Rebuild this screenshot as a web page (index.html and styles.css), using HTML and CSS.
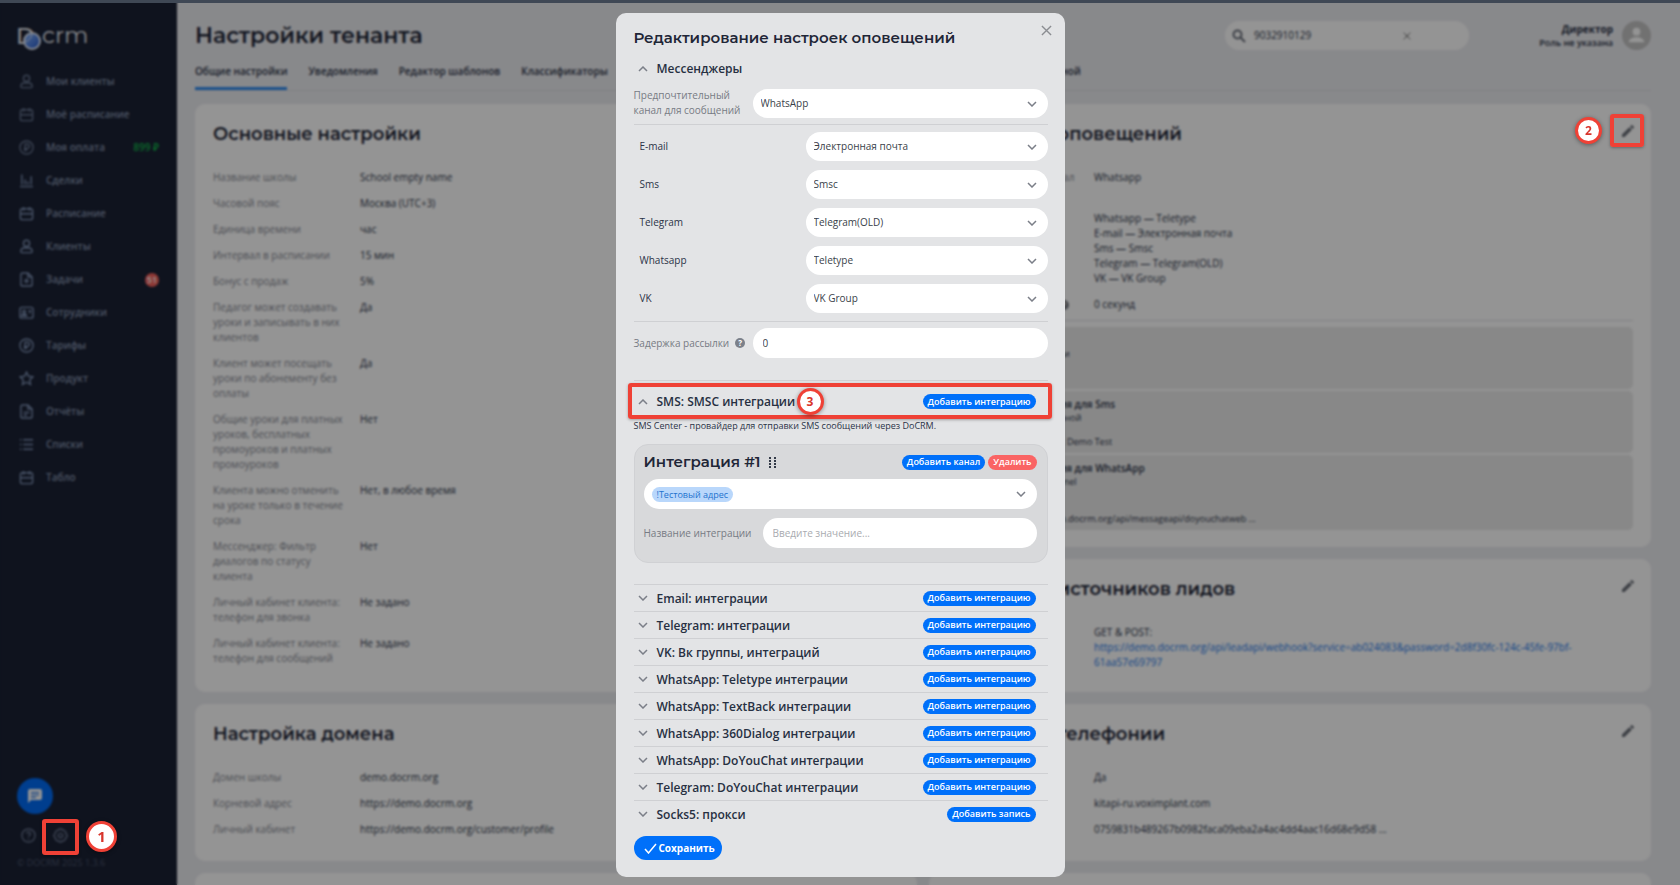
FILE: index.html
```html
<!DOCTYPE html>
<html lang="ru">
<head>
<meta charset="utf-8">
<title>Настройки тенанта</title>
<link rel="stylesheet" href="styles.css">
</head>
<body>
<svg class="sprite" aria-hidden="true">
  <symbol id="i-user" viewBox="0 0 16 16"><circle cx="8" cy="4.7" r="3.3"/><path d="M2 13.2c0-2.6 2-3.6 3.6-3.6h4.8c1.600 0 3.600 1 3.600 3.600 0 .8-.6 1.300-1.300 1.300H3.300c-.7 0-1.300-.5-1.300-1.300z"/></symbol>
  <symbol id="i-cal" viewBox="0 0 16 16"><rect x="1.500" y="3" width="13" height="11.500" rx="2"/><path d="M4.800 1v4M11.200 1v4M1.500 8.200h13"/></symbol>
  <symbol id="i-rub" viewBox="0 0 16 16"><circle cx="8" cy="8" r="7"/><path d="M6.500 12V4.500h2.300a2.200 2.200 0 0 1 0 4.400H5.200M5.200 10.600h3.800"/></symbol>
  <symbol id="i-chart" viewBox="0 0 16 16"><path d="M1 14.500h14M3 1.500v11M6.500 7v5.500M9.500 9v3.500M13 3.500v9"/></symbol>
  <symbol id="i-task" viewBox="0 0 16 16"><path d="M4 1h5.500L14 5.500V13a2 2 0 0 1-2 2H4a2 2 0 0 1-2-2V3a2 2 0 0 1 2-2zM9.500 1v4.500H14"/><circle cx="8" cy="9.500" r="1.500"/></symbol>
  <symbol id="i-idcard" viewBox="0 0 16 16"><rect x="1" y="2.500" width="14" height="11.500" rx="2"/><circle cx="5.500" cy="7" r="1.500"/><path d="M3 11.500c0-2.600 5-2.600 5 0zM10 6h3M11.500 9V6"/></symbol>
  <symbol id="i-star" viewBox="0 0 16 16"><path d="M8 1.200l2.100 4.400 4.800.6-3.500 3.300.9 4.800L8 12l-4.300 2.300.9-4.800L1.100 6.200l4.800-.6z"/></symbol>
  <symbol id="i-report" viewBox="0 0 16 16"><path d="M4 1h5.500L14 5.500V13a2 2 0 0 1-2 2H4a2 2 0 0 1-2-2V3a2 2 0 0 1 2-2zM9.500 1v4.500H14M5 9h6M5 12h3.500"/></symbol>
  <symbol id="i-list" viewBox="0 0 16 16"><path d="M4.500 3H15M4.500 8H15M4.500 13H15M1 3h1.500M1 8h1.500M1 13h1.500"/></symbol>
  <symbol id="i-pencil" viewBox="0 0 24 24"><path d="M3 17.250V21h3.750L17.800 9.940l-3.750-3.750L3 17.250zM20.700 7.040a1 1 0 0 0 0-1.410l-2.340-2.340a1 1 0 0 0-1.410 0l-1.830 1.830 3.750 3.750 1.830-1.830z"/></symbol>
  <symbol id="i-down" viewBox="0 0 10 6"><path d="M1 1l4 4 4-4"/></symbol>
  <symbol id="i-up" viewBox="0 0 10 6"><path d="M1 5l4-4 4 4"/></symbol>
  <symbol id="i-close" viewBox="0 0 12 12"><path d="M1 1l10 10M11 1L1 11"/></symbol>
</svg>

<div class="app">
  <aside class="sidebar">
    <svg class="logo" viewBox="0 0 72 26" role="img" aria-label="Docrm">
      <defs><linearGradient id="ball" x1="0" y1="0" x2="1" y2="1"><stop offset="0" stop-color="#86b6ff"/><stop offset="1" stop-color="#2456c8"/></linearGradient></defs>
      <text class="logo-d" x="-1" y="18">D</text>
      <circle cx="15" cy="15" r="8" fill="url(#ball)" stroke="#dfe6f5" stroke-width="2"/>
      <path d="M8 16c3-1 6-3 7-8" fill="none" stroke="#dfe6f5" stroke-width="1"/>
      <text class="logo-t" x="25" y="17">crm</text>
    </svg>
    <nav class="menu">
      <a class="item dim" href="#"><svg class="ic"><use href="#i-user"/></svg>Мои клиенты</a>
      <a class="item dim" href="#"><svg class="ic"><use href="#i-cal"/></svg>Моё расписание</a>
      <a class="item dim" href="#"><svg class="ic"><use href="#i-rub"/></svg>Моя оплата<span class="sum">899 ₽</span></a>
      <a class="item" href="#"><svg class="ic"><use href="#i-chart"/></svg>Сделки</a>
      <a class="item" href="#"><svg class="ic"><use href="#i-cal"/></svg>Расписание</a>
      <a class="item" href="#"><svg class="ic"><use href="#i-user"/></svg>Клиенты</a>
      <a class="item" href="#"><svg class="ic"><use href="#i-task"/></svg>Задачи<span class="count">51</span></a>
      <a class="item" href="#"><svg class="ic"><use href="#i-idcard"/></svg>Сотрудники</a>
      <a class="item" href="#"><svg class="ic"><use href="#i-rub"/></svg>Тарифы</a>
      <a class="item" href="#"><svg class="ic"><use href="#i-star"/></svg>Продукт</a>
      <a class="item" href="#"><svg class="ic"><use href="#i-report"/></svg>Отчёты</a>
      <a class="item" href="#"><svg class="ic"><use href="#i-list"/></svg>Списки</a>
      <a class="item" href="#"><svg class="ic"><use href="#i-cal"/></svg>Табло</a>
    </nav>
    <div class="side-foot">
      <button class="chat" aria-label="Чат"><svg viewBox="0 0 16 16"><path fill="#fff" d="M3 1h10a2 2 0 0 1 2 2v7a2 2 0 0 1-2 2H4l-3 3V3a2 2 0 0 1 2-2z"/><path d="M4 4.500h8M4 7h8M4 9.500h5" stroke="#0a63e0" stroke-width="1.200"/></svg></button>
      <div class="tools">
        <button class="tool" aria-label="Помощь"><svg class="ic" viewBox="0 0 16 16"><circle cx="8" cy="8" r="7"/><path d="M6 6.200a2 2 0 1 1 2.600 1.900c-.5.2-.6.5-.6 1.200M8 11v1.200"/></svg></button>
        <button class="tool" aria-label="Настройки"><svg class="ic" viewBox="0 0 16 16"><circle cx="8" cy="8" r="2.300"/><path d="M6.500 1h3l.6 1.600 1.700-.3 2 2.100-.5 1.700L15 7v2.400l-1.700.9.200 1.700-2.100 1.900-1.600-.4L9 15H7l-.8-1.500-1.700.4-2-2 .3-1.700L1 9.200V7l1.700-.9-.3-1.800 2-2 1.600.3z"/></svg></button>
      </div>
      <div class="copy">© DOCRM 2025 1.3.6</div>
    </div>
  </aside>

  <main class="main">
    <header class="top">
      <h1>Настройки тенанта</h1>
      <div class="search">
        <svg viewBox="0 0 14 14"><circle cx="5.500" cy="5.500" r="4"/><path d="M8.500 8.500l4.500 4.500"/></svg>
        <input type="text" value="9032910129" aria-label="Поиск">
        <button class="clear" aria-label="Очистить"><svg><use href="#i-close"/></svg></button>
      </div>
      <div class="user"><div class="who"><b>Директор</b><span>Роль не указана</span></div>
        <svg class="avatar" viewBox="0 0 30 30"><circle cx="15" cy="15" r="15" fill="#c3c3c3"/><circle cx="15" cy="11" r="4" fill="#fff"/><path d="M7 22c0-7 16-7 16 0z" fill="#fff"/></svg></div>
    </header>
    <nav class="tabs">
      <a class="tab on" href="#">Общие настройки</a><a class="tab" href="#">Уведомления</a><a class="tab" href="#">Редактор шаблонов</a><a class="tab" href="#">Классификаторы</a><a class="tab" href="#">Пользовательские поля</a><a class="tab" href="#">Интеграции</a><a class="tab" href="#">Управление кассой</a><a class="tab" href="#">Настройки основной</a>
    </nav>
    <div class="cols">
      <div class="col">
        <section class="card long">
          <h2>Основные настройки</h2>
          <dl class="props">
            <dt>Название школы</dt><dd>School empty name</dd>
            <dt>Часовой пояс</dt><dd>Москва (UTC+3)</dd>
            <dt>Единица времени</dt><dd>час</dd>
            <dt>Интервал в расписании</dt><dd>15 мин</dd>
            <dt>Бонус с продаж</dt><dd>5%</dd>
            <dt>Педагог может создавать уроки и записывать в них клиентов</dt><dd>Да</dd>
            <dt>Клиент может посещать уроки по абонементу без оплаты</dt><dd>Да</dd>
            <dt>Общие уроки для платных уроков, бесплатных промоуроков и платных промоуроков</dt><dd>Нет</dd>
            <dt>Клиента можно отменить на уроке только в течение срока</dt><dd>Нет, в любое время</dd>
            <dt>Мессенджер: Фильтр диалогов по статусу клиента</dt><dd>Нет</dd>
            <dt>Личный кабинет клиента: телефон для звонка</dt><dd>Не задано</dd>
            <dt>Личный кабинет клиента: телефон для сообщений</dt><dd>Не задано</dd>
          </dl>
        </section>
        <section class="card">
          <h2>Настройка домена</h2>
          <dl class="props">
            <dt>Домен школы</dt><dd>demo.docrm.org</dd>
            <dt>Корневой адрес</dt><dd>https://demo.docrm.org</dd>
            <dt>Личный кабинет</dt><dd>https://demo.docrm.org/customer/profile</dd>
          </dl>
        </section>
        <section class="card rest"></section>
      </div>
      <div class="col">
        <section class="card boxed">
          <button class="edit" aria-label="Изменить"><svg><use href="#i-pencil"/></svg></button>
          <h2>Настройки оповещений</h2>
          <dl class="props">
            <dt>Предпочтительный канал для сообщений</dt><dd>Whatsapp</dd>
            <dt>Каналы</dt><dd>Whatsapp — Teletype<br>E-mail — Электронная почта<br>Sms — Smsc<br>Telegram — Telegram(OLD)<br>VK — VK Group</dd>
            <dt class="help-row wide">Задержка рассылки<i class="q">?</i></dt><dd>0 секунд</dd>
          </dl>
          <div class="boxes">
            <div class="box"><b>Общие</b><span>Без рассылки</span></div>
            <div class="box"><b>Интеграция для Sms</b><span>Роль: Основной</span><span class="far">Имя канала: Demo Test</span></div>
            <div class="box tall"><b>Интеграция для WhatsApp</b><span>Канал: Channel</span><span class="far">https://demo.docrm.org/api/messageapi/doyouchatweb ...</span></div>
          </div>
        </section>
        <section class="card leads">
          <button class="edit" aria-label="Изменить"><svg><use href="#i-pencil"/></svg></button>
          <h2>Настройки источников лидов</h2>
          <dl class="props">
            <dt>Webhook</dt><dd>GET &amp; POST:<br><a href="#">https://demo.docrm.org/api/leadapi/webhook?service=ab024083&amp;password=2d8f30fc-124c-45fe-97bf-61aa57e69797</a></dd>
          </dl>
        </section>
        <section class="card">
          <button class="edit" aria-label="Изменить"><svg><use href="#i-pencil"/></svg></button>
          <h2>Настройки телефонии</h2>
          <dl class="props">
            <dt>Включена</dt><dd>Да</dd>
            <dt>Домен</dt><dd>kitapi-ru.voximplant.com</dd>
            <dt>Токен</dt><dd>0759831b489267b0982faca09eba2a4ac4dd4aac16d68e9d58 ...</dd>
          </dl>
        </section>
        <section class="card rest"></section>
      </div>
    </div>
  </main>
</div>

<div class="overlay">
  <div class="modal" role="dialog" aria-labelledby="mt">
    <button class="x" aria-label="Закрыть"><svg><use href="#i-close"/></svg></button>
    <h3 id="mt">Редактирование настроек оповещений</h3>
    <div class="sec first"><svg class="chev"><use href="#i-up"/></svg><span>Мессенджеры</span></div>
    <div class="field"><label for="f0">Предпочтительный канал для сообщений</label><div class="sel"><select id="f0"><option>WhatsApp</option></select><svg class="chev"><use href="#i-down"/></svg></div></div>
    <div class="channels">
      <label for="c1">E-mail</label><div class="sel"><select id="c1"><option>Электронная почта</option></select><svg class="chev"><use href="#i-down"/></svg></div>
      <label for="c2">Sms</label><div class="sel"><select id="c2"><option>Smsc</option></select><svg class="chev"><use href="#i-down"/></svg></div>
      <label for="c3">Telegram</label><div class="sel"><select id="c3"><option>Telegram(OLD)</option></select><svg class="chev"><use href="#i-down"/></svg></div>
      <label for="c4">Whatsapp</label><div class="sel"><select id="c4"><option>Teletype</option></select><svg class="chev"><use href="#i-down"/></svg></div>
      <label for="c5">VK</label><div class="sel"><select id="c5"><option>VK Group</option></select><svg class="chev"><use href="#i-down"/></svg></div>
    </div>
    <div class="field"><label for="f1" class="help-row">Задержка рассылки<i class="q">?</i></label><input id="f1" class="inp" type="text" value="0"></div>

    <div class="open-sec">
      <div class="sec"><svg class="chev"><use href="#i-up"/></svg><span>SMS: SMSC интеграции</span><button class="pill">Добавить интеграцию</button>
        <div class="mark mark3"></div><div class="num num3">3</div></div>
      <p class="note">SMS Center - провайдер для отправки SMS сообщений через DoCRM.</p>
      <div class="panel">
        <div class="phead"><h4>Интеграция #1</h4>
          <svg class="dots" viewBox="0 0 7 11"><path d="M0 0h2v2H0zM5 0h2v2H5zM0 3h2v2H0zM5 3h2v2H5zM0 6h2v2H0zM5 6h2v2H5zM0 9h2v2H0zM5 9h2v2H5z"/></svg>
          <button class="pill">Добавить канал</button><button class="pill red">Удалить</button></div>
        <button class="multi" role="combobox" aria-expanded="false" aria-label="Филиал"><span class="chip">!Тестовый адрес</span><svg class="chev"><use href="#i-down"/></svg></button>
        <div class="field"><label for="f2">Название интеграции</label><input id="f2" class="inp" type="text" placeholder="Введите значение..."></div>
      </div>
    </div>

    <div class="list">
      <div class="sec"><svg class="chev"><use href="#i-down"/></svg><span>Email: интеграции</span><button class="pill">Добавить интеграцию</button></div>
      <div class="sec"><svg class="chev"><use href="#i-down"/></svg><span>Telegram: интеграции</span><button class="pill">Добавить интеграцию</button></div>
      <div class="sec"><svg class="chev"><use href="#i-down"/></svg><span>VK: Вк группы, интеграций</span><button class="pill">Добавить интеграцию</button></div>
      <div class="sec"><svg class="chev"><use href="#i-down"/></svg><span>WhatsApp: Teletype интеграции</span><button class="pill">Добавить интеграцию</button></div>
      <div class="sec"><svg class="chev"><use href="#i-down"/></svg><span>WhatsApp: TextBack интеграции</span><button class="pill">Добавить интеграцию</button></div>
      <div class="sec"><svg class="chev"><use href="#i-down"/></svg><span>WhatsApp: 360Dialog интеграции</span><button class="pill">Добавить интеграцию</button></div>
      <div class="sec"><svg class="chev"><use href="#i-down"/></svg><span>WhatsApp: DoYouChat интеграции</span><button class="pill">Добавить интеграцию</button></div>
      <div class="sec"><svg class="chev"><use href="#i-down"/></svg><span>Telegram: DoYouChat интеграции</span><button class="pill">Добавить интеграцию</button></div>
      <div class="sec"><svg class="chev"><use href="#i-down"/></svg><span>Socks5: прокси</span><button class="pill">Добавить запись</button></div>
    </div>
    <button class="save"><svg viewBox="0 0 13 11"><path d="M1 6l3.500 4L12 1"/></svg>Сохранить</button>
  </div>
</div>
<div class="strip"></div>
<div class="mark mark1"></div><div class="num num1">1</div>
<div class="mark mark2"></div><div class="num num2">2</div>
</body>
</html>
```
FILE: styles.css
```css
* { box-sizing: border-box; }
body { margin: 0; font: 10px/15px "Open Sans", "Noto Sans", sans-serif; color: #2b3347; background: #ebecf0; overflow: hidden; }
button { font: inherit; border: 0; background: none; padding: 0; cursor: pointer; }
a { text-decoration: none; color: inherit; }
h1, h2, h3, h4 { margin: 0; font-family: Montserrat, Inter, sans-serif; font-weight: 600; color: #1f2637; }
svg { display: block; fill: none; stroke: none; }
.sprite { position: absolute; width: 0; height: 0; }

.app { display: flex; height: 100vh; overflow: hidden; }

/* Sidebar */
.sidebar { width: 177px; flex: none; background: #1a2134; padding: 26px 18px 14px 17px; display: flex; flex-direction: column; }
.logo { width: 72px; height: 26px; overflow: visible; }
.logo text { fill: #e8eaf0; font-family: Montserrat, Inter, sans-serif; }
.logo-d { font-size: 23px; font-weight: 500; }
.logo-t { font-size: 23px; font-weight: 400; }
.menu { display: flex; flex-direction: column; margin-top: 13px; }
.item { display: flex; align-items: center; height: 33px; padding-left: 2px; gap: 12px; color: #8593ae; font-weight: 600; white-space: nowrap; }
.ic { width: 15px; height: 15px; fill: none; stroke: #7d90b2; stroke-width: 1.5; flex: none; }
.dim .ic { stroke: #66748f; }
.sum { margin-left: auto; color: #12b34a; }
.count { margin-left: auto; width: 14px; height: 14px; border-radius: 50%; background: #f4615c; color: #fff; font-size: 9px; line-height: 14px; text-align: center; }
.side-foot { margin-top: auto; }
.chat { display: flex; align-items: center; justify-content: center; width: 36px; height: 36px; border-radius: 50%; background: #006bf5; }
.chat svg { width: 16px; height: 16px; }
.tools { display: flex; gap: 17px; padding: 14px 4px 12px; }
.tool .ic { stroke: #66728c; }
.copy { color: #4c566f; font-size: 9px; line-height: 16px; }

/* Header */
.main { flex: 1; min-width: 0; padding: 20px 29px 0 18px; }
.top { display: flex; align-items: center; height: 31px; }
.top h1 { font-size: 22px; line-height: 30px; }
.search { display: flex; align-items: center; width: 244px; height: 29px; margin-left: auto; padding: 0 58px 0 7px; gap: 8px; border-radius: 15px; background: #fff; }
.search > svg { width: 14px; height: 14px; stroke: #6b707c; stroke-width: 2; flex: none; }
.search input { flex: 1; min-width: 0; border: 0; padding: 0; background: none; font: inherit; color: #2b3347; }
.clear svg { width: 8px; height: 8px; stroke: #777; stroke-width: 1.5; }
.user { display: flex; align-items: center; justify-content: flex-end; gap: 9px; width: 182px; }
.who { display: flex; flex-direction: column; text-align: right; font-size: 9px; line-height: 13px; font-weight: 600; }
.who b { font-size: 10px; font-weight: 700; }
.avatar { width: 29px; height: 29px; }
.tabs { display: flex; gap: 21px; border-bottom: 1px solid #dcdde2; margin-top: 8px; height: 32px; white-space: nowrap; }
.tab { font-weight: 600; line-height: 24px; height: 31px; }
.on { border-bottom: 3px solid #2f8bef; }

/* Cards */
.cols { display: flex; gap: 12px; margin-top: 13px; align-items: flex-start; }
.col { flex: 1; min-width: 0; display: flex; flex-direction: column; gap: 12px; }
.card { position: relative; background: #fff; border-radius: 10px; padding: 18px 18px 24px; }
.card h2 { font-size: 18px; line-height: 24px; }
.rest { height: 120px; }
.props { display: grid; grid-template-columns: 135px 1fr; gap: 11px 12px; margin: 24px 0 0; }
.props dt { color: #858892; }
.props dd { margin: 0; overflow-wrap: break-word; padding-right: 40px; }
.props dd a { color: #2176e8; }
.edit { position: absolute; top: 19px; right: 15px; }
.edit svg { width: 16px; height: 16px; fill: #6a6e78; }
.help-row { display: flex; align-items: center; gap: 6px; }
.wide { gap: 16px; }
.q { display: inline-block; width: 10px; height: 10px; border-radius: 50%; background: #7b808a; color: #fff; font: 700 8px/10px "Open Sans", sans-serif; text-align: center; }
.long { padding-bottom: 26px; }
.leads { padding-bottom: 22px; }
.boxed { padding-bottom: 17px; }
.boxes { display: flex; flex-direction: column; gap: 2px; margin-top: 8px; border-top: 1px solid #e0e0e3; padding-top: 6px; }
.box { display: flex; flex-direction: column; height: 62px; padding: 6px 0 4px 64px; border-radius: 5px; background: #ebebeb; font-size: 9px; line-height: 14px; }
.box b { font-weight: 600; font-size: 10px; }
.far { margin-top: auto; }
.tall { height: 75px; }

/* Modal */
.overlay { position: fixed; inset: 0; display: flex; justify-content: center; align-items: flex-start; padding-top: 13px; background: rgba(0, 0, 0, .42); backdrop-filter: blur(1px); }
.modal { position: relative; width: 449px; padding: 13px 17px 17px 18px; border-radius: 10px; background: #e3e4e6; }
.modal h3 { font-size: 15px; line-height: 24px; }
.x { position: absolute; top: 12px; right: 13px; }
.x svg { width: 11px; height: 11px; stroke: #8b8d92; stroke-width: 1.5; }
.chev { width: 10px; height: 6px; stroke: #7b7f88; stroke-width: 1.5; flex: none; }
.sec { position: relative; display: flex; align-items: center; height: 27px; padding: 0 12px 0 4px; }
.sec > .chev { margin-right: 9px; }
.sec > span { font-size: 12px; font-weight: 600; color: #273042; }
.first { margin: 5px 0 6px; }
.pill { margin-left: auto; height: 15px; padding: 0 5px; border-radius: 8px; background: #0070fa; color: #fff; font-size: 9px; line-height: 14px; font-weight: 600; }
.pill + .pill { margin-left: 3px; }
.red { background: #fa6464; }
.field { display: flex; align-items: center; }
.field label { width: 119px; flex: none; color: #777b84; }
.sel { position: relative; flex: 1; min-width: 0; }
.sel .chev, .multi .chev { position: absolute; right: 11px; top: 12px; pointer-events: none; }
select, .inp { display: block; width: 100%; border: 0; border-radius: 15px; background: #fff; color: #3a3f4a; font: inherit; appearance: none; }
select { height: 29px; padding: 0 30px 0 8px; }
.inp { height: 30px; padding: 0 10px; flex: 1; min-width: 0; }
.inp::placeholder { color: #a9abb0; }
.channels { display: grid; grid-template-columns: 166px 1fr; gap: 9px 0; align-items: center; margin: 6px 0; padding: 7px 0 8px 6px; border: solid #cfd0d3; border-width: 1px 0; }
.open-sec { margin: 22px 0 21px; border-top: 1px solid #cfd0d3; padding-top: 7px; }
.note { margin: 3px 0 10px; font-size: 9px; line-height: 16px; }
.panel { padding: 8px 10px 14px 9px; border: 1px solid #d0d1d4; border-radius: 14px; background: #d8d9db; }
.phead { display: flex; align-items: center; height: 18px; margin-bottom: 8px; }
.phead h4 { font-size: 15px; line-height: 18px; }
.dots { width: 7px; height: 11px; margin-left: 8px; fill: #333a48; }
.multi { position: relative; display: flex; align-items: center; width: 100%; height: 30px; padding: 0 8px; margin-bottom: 9px; border-radius: 15px; background: #fff; }
.chip { padding: 0 5px; border-radius: 8px; background: #b9d7fb; color: #2373cf; font-size: 9px; line-height: 15px; }
.list .sec { border-top: 1px solid #cfd0d3; }
.save { display: flex; align-items: center; gap: 2px; height: 24px; margin-top: 9px; padding: 0 7px 0 10px; border-radius: 12px; background: #0070fa; color: #fff; font-weight: 700; }
.save svg { width: 13px; height: 11px; stroke: #fff; stroke-width: 1.5; }

/* Callouts over the page */
.strip { position: fixed; top: 0; left: 0; right: 0; height: 3px; background: #3f4855; }
.mark { position: fixed; border: 4px solid #ef4136; border-radius: 3px; pointer-events: none; box-shadow: 0 1px 3px rgba(0, 0, 0, .3); }
.num { position: fixed; width: 27px; height: 27px; border: 3px solid #ef4136; border-radius: 50%; background: #fff; color: #d8352c; font-weight: 700; font-size: 12px; line-height: 21px; text-align: center; box-shadow: 0 1px 4px rgba(0, 0, 0, .4); }
.mark1 { left: 42px; bottom: 30px; width: 37px; height: 36px; }
.num1 { left: 86px; bottom: 33px; width: 31px; height: 31px; font-size: 15px; line-height: 25px; }
.mark2 { right: 36px; top: 114px; width: 34px; height: 33px; }
.num2 { right: 78px; top: 117px; }
.mark3 { position: absolute; left: -6px; right: -4px; top: -5px; height: 36px; }
.num3 { position: absolute; left: 163px; top: 0; }
```
